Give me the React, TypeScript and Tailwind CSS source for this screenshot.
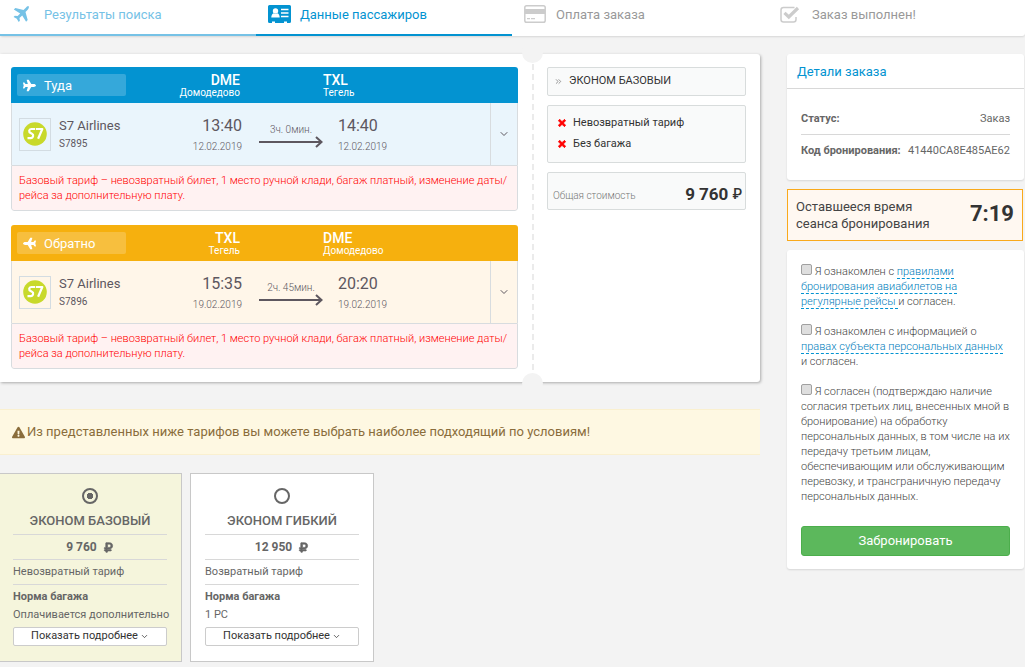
import { useState } from 'react';
import { FaExclamationTriangle, FaPlane, FaTimes, FaRubleSign } from 'react-icons/fa';
import { ChevronDown, ChevronsRight } from 'lucide-react';

/* Step icons */
function PlaneIcon() {
  return (
    <svg viewBox="0 0 18 18" className="w-[18px] h-[18px]" fill="currentColor">
      <path d="M16.6 1.2c.7.7.2 2.3-.9 3.5l-2.2 2.2 2.2 8.2-1.6 1.6-3.9-6.3-2.7 2.7.4 2.7-1.2 1.2-1.9-3.2L1.6 12l1.2-1.3 2.8.4 2.6-2.7L1.8 4.6 3.4 3l8.1 2 2.1-2.1c1.1-1.2 2.4-2.3 3-1.7z" />
    </svg>
  );
}

function PassengerIcon() {
  return (
    <svg viewBox="0 0 23 18" className="w-[23px] h-[18px]">
      <path fill="currentColor" d="M1.500 0h20Q23 0 23 1.500v15Q23 18 21.500 18H19v-1.500h-3V18H7v-1.500H4V18H1.500Q0 18 0 16.500v-15Q0 0 1.500 0z" />
      <circle cx="7.500" cy="6" r="2.700" fill="#fff" />
      <path fill="#fff" d="M3.300 12.600c0-2.400 1-4 2.300-4.400 1.200.9 2.600.9 3.800 0 1.300.4 2.300 2 2.300 4.400z" />
      <path stroke="#fff" strokeWidth="1.500" d="M13 4.500h7.500M13 8h7.500M13 11.500h7.500" />
    </svg>
  );
}

function CardIcon() {
  return (
    <svg viewBox="0 0 22 18" className="w-[22px] h-[18px] text-[#ccc]">
      <rect x=".8" y=".8" width="20.400" height="16.400" rx="1.800" fill="none" stroke="currentColor" strokeWidth="1.500" />
      <path fill="currentColor" d="M1 4h20v5H1zM3 13h3v1.300H3zM7 13h4v1.300H7z" />
    </svg>
  );
}

function DoneIcon() {
  return (
    <svg viewBox="0 0 20 17" className="w-[20px] h-[17px] text-[#ccc]" fill="none" stroke="currentColor">
      <path strokeWidth="1.500" d="M14.500 1.500h-11Q1 1.500 1 4v9.500Q1 16 3.500 16h10q2.500 0 2.500-2.500V11" />
      <path strokeWidth="3.200" d="M4.500 6.800l4.300 4.200L18 2" />
    </svg>
  );
}

function S7Logo() {
  return (
    <svg viewBox="0 0 24 24" className="w-6 h-6">
      <circle cx="12" cy="12" r="11.800" fill="#c8d92b" />
      <g fill="none" stroke="#fff" strokeWidth="2.200" strokeLinejoin="round">
        <path d="M12 7H8.200Q6.500 7 6.200 8.700 6 10.300 7.600 11l1.400.7q1.500.7 1.100 2.400-.5 2.100-2.300 2.100H4.500" />
        <path d="M12.800 7h6.500l-4.200 9.800" />
      </g>
    </svg>
  );
}

function Arrow() {
  return (
    <svg viewBox="0 0 64 12" className="w-16 h-3" fill="none" stroke="currentColor" strokeWidth="2">
      <path d="M0 6h62M57 1l5.500 5L57 11" />
    </svg>
  );
}

const steps = [
  { title: 'Результаты поиска', icon: PlaneIcon, className: 'text-[#76c2e6] border-[#76c2e6]' },
  { title: 'Данные пассажиров', icon: PassengerIcon, className: 'text-[#0393d1] border-[#0393d1]' },
  { title: 'Оплата заказа', icon: CardIcon, className: 'text-[#999] border-transparent' },
  { title: 'Заказ выполнен!', icon: DoneIcon, className: 'text-[#999] border-transparent' },
];

const flights = [
  {
    label: 'Туда',
    head: 'bg-[#0393d1]',
    body: 'bg-[#eaf5fc]',
    plane: 'rotate-0',
    number: 'S7895',
    from: { code: 'DME', city: 'Домодедово', time: '13:40', date: '12.02.2019' },
    to: { code: 'TXL', city: 'Тегель', time: '14:40', date: '12.02.2019' },
    duration: '3ч. 0мин.',
  },
  {
    label: 'Обратно',
    head: 'bg-[#f6b00e]',
    body: 'bg-[#fff6e9]',
    plane: 'rotate-180',
    number: 'S7896',
    from: { code: 'TXL', city: 'Тегель', time: '15:35', date: '19.02.2019' },
    to: { code: 'DME', city: 'Домодедово', time: '20:20', date: '19.02.2019' },
    duration: '2ч. 45мин.',
  },
];

const tariffs = [
  { id: 'basic', name: 'ЭКОНОМ БАЗОВЫЙ', price: '9 760', refund: 'Невозвратный тариф', baggage: 'Оплачивается дополнительно' },
  { id: 'flex', name: 'ЭКОНОМ ГИБКИЙ', price: '12 950', refund: 'Возвратный тариф', baggage: '1 PC' },
];

type Flight = (typeof flights)[number];

function FlightCard({ flight }: { flight: Flight }) {
  return (
    <section className="rounded-[3px] overflow-hidden">
      <div className={`${flight.head} h-9 flex items-center text-white`}>
        <div className="ml-1.5 w-[109px] h-[22px] rounded-[2px] bg-white/20 flex items-center gap-2 px-1.5 pt-px text-[13px]">
          <FaPlane size={13} className={flight.plane} />
          {flight.label}
        </div>
        <div className="w-[114px] pt-px text-right">
          <div className="text-[14px] leading-[14px] font-medium">{flight.from.code}</div>
          <div className="text-[10px] leading-[12px]">{flight.from.city}</div>
        </div>
        <div className="ml-[83px] pt-px">
          <div className="text-[14px] leading-[14px] font-medium">{flight.to.code}</div>
          <div className="text-[10px] leading-[12px]">{flight.to.city}</div>
        </div>
      </div>

      <div className={`${flight.body} h-[62px] flex border-x border-[#d8dcdf] text-[#5d575f]`}>
        <div className="flex-1 flex items-center pl-[7px]">
          <div className="w-8 h-[33px] border border-[#d3dce2] flex items-center justify-center shrink-0">
            <S7Logo />
          </div>
          <div className="ml-2 w-[91px] pt-0.5">
            <div className="text-[13px] leading-[18px]">S7 Airlines</div>
            <div className="text-[10px] leading-[18px]">{flight.number}</div>
          </div>
          <div className="w-[92px] pt-[3px] text-right">
            <div className="text-[16px] leading-[22px]">{flight.from.time}</div>
            <div className="text-[10px] leading-[20px] font-light">{flight.from.date}</div>
          </div>
          <div className="ml-[17px] w-16 pt-[3px] text-center">
            <div className="text-[10px] leading-[12px] font-light">{flight.duration}</div>
            <Arrow />
          </div>
          <div className="ml-[15px] pt-[3px]">
            <div className="text-[16px] leading-[22px]">{flight.to.time}</div>
            <div className="text-[10px] leading-[20px] font-light">{flight.to.date}</div>
          </div>
        </div>
        <button aria-label="Подробности рейса" className="w-[27px] border-l border-[#d8dcdf] flex items-center justify-center">
          <ChevronDown size={12} />
        </button>
      </div>

      <p className="border border-[#d8dcdf] rounded-b-[3px] bg-[#fff2f2] text-[#f00] text-[11px] leading-[15px] font-light pl-[7px] py-[7px]">
        Базовый тариф – невозвратный билет, 1 место ручной клади, багаж платный, изменение даты/
        <wbr />
        рейса за дополнительную плату.
      </p>
    </section>
  );
}

function Consent({ id, children }: { id: string; children: React.ReactNode }) {
  return (
    <div>
      <input
        id={id}
        type="checkbox"
        className="appearance-none inline-block w-[11px] h-[11px] border border-[#a0a0a0] rounded-[2px] bg-[#dedede] checked:bg-[#0393d1]"
      />{' '}
      <label htmlFor={id}>{children}</label>
    </div>
  );
}

function TermsLink({ children }: { children: React.ReactNode }) {
  return (
    <a href="#" className="text-[#007dbb] border-b border-dashed border-[#0393d1]">
      {children}
    </a>
  );
}

export default function App() {
  const [tariff, setTariff] = useState('basic');

  return (
    <div className="min-h-screen bg-[#f3f3f3] font-['Roboto',sans-serif] text-[#666]">
      {/* Steps */}
      <nav className="grid grid-cols-4 pr-px bg-white rounded-b-[3px] shadow-[0_1px_2px_rgba(0,0,0,0.12)]">
        {steps.map((step) => (
          <div key={step.title} className={`${step.className} h-9 border-b-2 flex items-start pt-[5px] text-[13px] leading-[20px]`}>
            <div className="w-11 pl-3 h-[18px] flex items-center">
              <step.icon />
            </div>
            {step.title}
          </div>
        ))}
      </nav>

      <div className="flex items-start gap-[27px] pt-[18px] pb-1.5 pr-px">
        <main className="flex-1 min-w-0">
          {/* Order summary */}
          <div className="relative flex bg-white rounded-r-[3px] shadow-[1px_1px_3px_rgba(0,0,0,0.3)] py-[13px] pl-[11px] pr-[14px]">
            <div className="flex-1 flex flex-col gap-[14px]">
              {flights.map((flight) => (
                <FlightCard key={flight.label} flight={flight} />
              ))}
            </div>
            <div className="w-[29px] -my-[13px] relative">
              <svg className="w-full h-full text-[#ebebeb]">
                <path d="M15 10V1000" stroke="currentColor" strokeWidth="2" strokeDasharray="6 4" />
              </svg>
              <span className="absolute left-1 -top-3 w-[21px] h-[21px] rounded-full bg-[#f3f3f3]" />
              <span className="absolute left-1 -bottom-3 w-[21px] h-[21px] rounded-full bg-[#f3f3f3]" />
            </div>
            <aside className="w-[199px] flex flex-col gap-[9px] text-[#333] text-[11px]">
              <div className="h-[29px] flex items-center gap-1.5 px-1.5 border border-[#d8dcdc] rounded-[2px] bg-[#f9fafa]">
                <ChevronsRight size={9} className="text-[#777]" />
                ЭКОНОМ БАЗОВЫИ
              </div>
              <ul className="h-[58px] px-[9px] pt-1.5 border border-[#d8dcdc] rounded-[2px] bg-[#f9fafa] leading-[21px]">
                <li className="flex items-center gap-1.5">
                  <FaTimes size={10} className="text-[#f00]" stroke="currentColor" strokeWidth={50} />
                  Невозвратный тариф
                </li>
                <li className="flex items-center gap-1.5">
                  <FaTimes size={10} className="text-[#f00]" stroke="currentColor" strokeWidth={50} />
                  Без багажа
                </li>
              </ul>
              <div className="h-[38px] pl-[5px] pr-[3px] flex items-center justify-between border border-[#d8dcdc] rounded-[2px] bg-[#f9fafa]">
                <span className="text-[10px] pt-2 font-light text-[#777]">Общая стоимость</span>
                <span className="flex items-center gap-1 pt-1.5 text-[17px] leading-[24px] font-bold">
                  9 760 <span className="text-[14px] font-medium">₽</span>
                </span>
              </div>
            </aside>
          </div>

          <div className="mt-[27px] h-[46px] px-3 flex items-center gap-[2px] bg-[#fef8e2] border-y border-[#faf0cf] text-[#8a6d3b] text-[13px]">
            <FaExclamationTriangle size={13} />
            Из представленных ниже тарифов вы можете выбрать наиболее подходящий по условиям!
          </div>

          {/* Tariffs */}
          <div className="mt-[18px] -ml-0.5 flex gap-2">
            {tariffs.map((item) => (
              <div
                key={item.id}
                className={`w-[184px] px-[14px] pt-[14px] pb-[15px] border border-[#c8c8c8] text-[11px] ${tariff === item.id ? 'bg-[#f5f5dc]' : 'bg-white'}`}
              >
                <label className="block text-center text-[13px] font-medium">
                  <input
                    type="radio"
                    name="tariff"
                    checked={tariff === item.id}
                    onChange={() => setTariff(item.id)}
                    className="appearance-none block mx-auto w-4 h-4 rounded-full border-2 border-[#666] checked:bg-[radial-gradient(circle,#666_3px,transparent_3px)]"
                  />
                  <span className="block pt-[7px] pb-[3px] leading-[20px]">{item.name}</span>
                </label>
                <div className="h-[25px] border-t border-[#d8d8d8] flex items-center justify-center gap-1.5 text-[12px] font-bold">
                  {item.price}
                  <FaRubleSign size={11} stroke="currentColor" strokeWidth={30} />
                </div>
                <div className="border-y border-[#d8d8d8] leading-[24px]">{item.refund}</div>
                <div className="pt-px leading-[22px] font-bold">Норма багажа</div>
                <div className="leading-[14px] whitespace-nowrap">{item.baggage}</div>
                <button className="mt-[5px] w-full h-[19px] border border-[#ccc] rounded-[2px] bg-white text-[#333] flex items-center justify-center gap-0.5">
                  Показать подробнее <ChevronDown size={9} />
                </button>
              </div>
            ))}
          </div>
        </main>

        {/* Sidebar */}
        <aside className="w-[237px] shrink-0 flex flex-col gap-[9px]">
          <section className="bg-white rounded-[3px] shadow-[0_1px_2px_rgba(0,0,0,0.12)] pb-[13px]">
            <h2 className="h-[35px] px-2.5 pt-0.5 flex items-center border-b border-[#d8d8d8] text-[13px] text-[#0393d1]">Детали заказа</h2>
            <dl className="px-[14px] pt-[13px] text-[11px]">
              <div className="h-[33px] pt-0.5 flex items-center justify-between border-b border-[#d8d8d8]">
                <dt className="font-bold">Статус:</dt>
                <dd>Заказ</dd>
              </div>
              <div className="h-8 flex items-center justify-between">
                <dt className="font-bold">Код бронирования:</dt>
                <dd>41440CA8E485AE62</dd>
              </div>
            </dl>
          </section>

          <section className="mr-px h-[52px] px-2 flex items-center justify-between border border-[#f9a91b] bg-[#fff8f1] text-[#444]">
            <div className="text-[13px] leading-[17px]">
              Оставшееся время
              <br />
              сеанса бронирования
            </div>
            <time className="text-[22px] font-bold text-[#333] pb-1">7:19</time>
          </section>

          <form onSubmit={(e) => e.preventDefault()} className="bg-white rounded-[3px] shadow-[0_1px_2px_rgba(0,0,0,0.12)] px-[14px] pt-[14px] pb-[13px]">
            <div className="flex flex-col gap-[15px] text-[11px] leading-[15px] font-light text-[#444]">
              <Consent id="rules">
                Я ознакомлен с <TermsLink>правилами бронирования авиабилетов на регулярные рейсы </TermsLink>и согласен.
              </Consent>
              <Consent id="rights">
                Я ознакомлен с информацией о <TermsLink>правах субъекта персональных данных</TermsLink> и согласен.
              </Consent>
              <Consent id="third">
                Я согласен (подтверждаю наличие согласия третьих лиц, внесенных мной в бронирование) на обработку персональных данных, в том числе на их передачу третьим лицам, обеспечивающим или обслуживающим перевозку, и трансграничную передачу персональных данных.
              </Consent>
            </div>
            <button type="submit" className="mt-[22px] w-full h-[30px] rounded-[3px] border border-[#4cae4c] bg-[#5cb85c] text-white text-[13px]">
              Забронировать
            </button>
          </form>
        </aside>
      </div>
    </div>
  );
}
